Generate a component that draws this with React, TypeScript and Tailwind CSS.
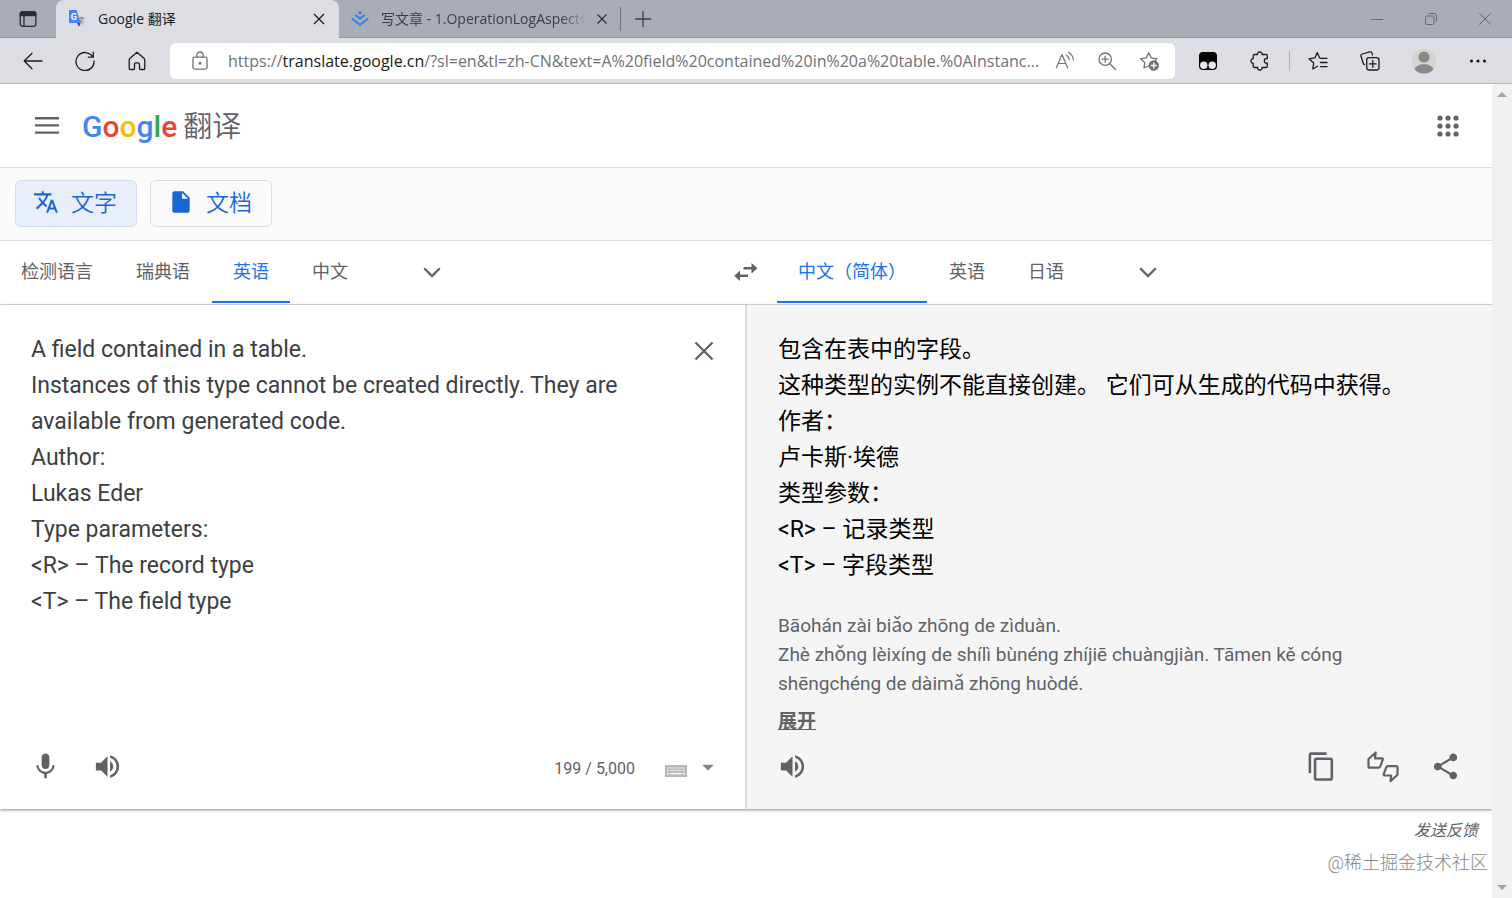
import { useState, type ReactNode } from "react";
import {
  MdContentCopy,
  MdArrowDropDown,
  MdInsertDriveFile,
  MdMic,
  MdShare,
  MdTranslate,
  MdVolumeUp,
} from "react-icons/md";

const UI = "font-['Open_Sans','Noto_Sans_CJK_SC',sans-serif]";
const BODY = "font-[Roboto,'Noto_Sans_CJK_SC',sans-serif]";

const SOURCE_TEXT = `A field contained in a table.
Instances of this type cannot be created directly. They are available from generated code.
Author:
Lukas Eder
Type parameters:
<R> – The record type
<T> – The field type`;

const TRANSLATION = [
  "包含在表中的字段。",
  "这种类型的实例不能直接创建。 它们可从生成的代码中获得。",
  "作者：",
  "卢卡斯·埃德",
  "类型参数：",
  "<R> – 记录类型",
  "<T> – 字段类型",
];

type IconButtonProps = { label: string; className?: string; children: ReactNode };

function IconButton({ label, className = "", children }: IconButtonProps) {
  return (
    <button type="button" aria-label={label} className={`flex shrink-0 items-center justify-center ${className}`}>
      {children}
    </button>
  );
}

type LineIconProps = { size?: number; stroke?: number; children: ReactNode };

function LineIcon({ size = 20, stroke = 1.3, children }: LineIconProps) {
  return (
    <svg
      width={size}
      height={size}
      viewBox="0 0 20 20"
      fill="none"
      stroke="currentColor"
      strokeWidth={stroke}
      strokeLinecap="round"
      strokeLinejoin="round"
      aria-hidden="true"
    >
      {children}
    </svg>
  );
}

function TranslateFavicon() {
  return (
    <svg width="18" height="18" viewBox="0 0 18 18" aria-hidden="true">
      <path d="M8 5h8.2c.5 0 .8.3.8.8v9.4c0 .5-.3.8-.8.8H11z" fill="#d3d6dc" />
      <path d="M11 8.2h5M13.4 7v1.2M15 8.2c-.5 2-1.600 3.500-3.200 4.600M12 9.800c.7 1.500 1.800 2.700 3.300 3.500" stroke="#6f7378" strokeWidth=".9" fill="none" />
      <path d="M1 0h7.600l4 13H2c-.6 0-1-.4-1-1z" fill="#4285f4" />
      <path d="M9 13h3.600L11 17z" fill="#5b3fa6" />
      <text x="2.800" y="9.800" fontSize="9" fontWeight="700" fontFamily="Roboto" fill="#fff">G</text>
    </svg>
  );
}

function TabStrip() {
  return (
    <div className="flex h-[38px] bg-[#a9adb5] text-[#3c4046]">
      <IconButton label="标签页操作" className="w-14 border-b border-[#90949b] text-[#2a2d31]">
        <svg width="18" height="18" viewBox="0 0 18 18" fill="none" stroke="currentColor" strokeWidth="1.300" aria-hidden="true">
          <rect x="1.200" y="1.700" width="15.600" height="14.600" rx="2.500" />
          <path d="M1.200 5.500V4a2.300 2.300 0 0 1 2.300-2.300h11A2.300 2.300 0 0 1 16.800 4v1.500z" fill="currentColor" />
          <path d="M5 5.500v10.500" />
        </svg>
      </IconButton>
      <div className="flex w-[283px] items-center rounded-t-lg bg-[#dcdee3] pr-3 pl-3">
        <TranslateFavicon />
        <span className="ml-3 flex-1 text-sm text-[#202124]">Google 翻译</span>
        <IconButton label="关闭标签页" className="size-4 text-[#1b1b1b]">
          <svg width="12" height="12" viewBox="0 0 12 12" stroke="currentColor" strokeWidth="1.300" aria-hidden="true">
            <path d="M1 1l10 10M11 1L1 11" />
          </svg>
        </IconButton>
      </div>
      <div className="flex flex-1 items-center border-b border-[#90949b] pl-3">
        <svg width="18" height="16" viewBox="0 0 18 16" fill="none" stroke="#2f7ff0" strokeWidth="1.900" aria-hidden="true">
          <path d="M9 .3l2 1.600L9 3.500 7 1.900z" fill="#2f7ff0" stroke="none" />
          <path d="M4.200 3.900L9 7.700l4.800-3.800M.8 7.400L9 13.900l8.200-6.500" />
        </svg>
        <span className="ml-3 w-[205px] overflow-hidden whitespace-nowrap text-sm [mask-image:linear-gradient(to_right,black_88%,transparent)]">
          写文章 - 1.OperationLogAspect代
        </span>
        <IconButton label="关闭标签页" className="ml-2 size-4 text-[#2a2d31]">
          <svg width="12" height="12" viewBox="0 0 12 12" stroke="currentColor" strokeWidth="1.200" aria-hidden="true">
            <path d="M1.500 1.500l9 9M10.500 1.500l-9 9" />
          </svg>
        </IconButton>
        <span className="ml-2.5 h-6 w-px bg-[#6e7278]" />
        <IconButton label="新建标签页" className="ml-3 size-5 text-[#3c4046]">
          <svg width="18" height="18" viewBox="0 0 18 18" stroke="currentColor" strokeWidth="1.300" aria-hidden="true">
            <path d="M9 1v16M1 9h16" />
          </svg>
        </IconButton>
        <div className="ml-auto flex text-[#666a70]">
          <IconButton label="最小化" className="w-[54px]">
            <svg width="12" height="12" viewBox="0 0 12 12" stroke="currentColor" aria-hidden="true">
              <path d="M0 6.500h12" />
            </svg>
          </IconButton>
          <IconButton label="还原" className="w-[54px]">
            <svg width="12" height="12" viewBox="0 0 12 12" fill="none" stroke="currentColor" aria-hidden="true">
              <rect x=".5" y="3" width="8.500" height="8.500" rx="1.500" />
              <path d="M3 1.200C3.300.8 3.800.5 4.300.5H9A2.500 2.500 0 0 1 11.500 3v4.700c0 .5-.3 1-.7 1.300" />
            </svg>
          </IconButton>
          <IconButton label="关闭窗口" className="w-[54px]">
            <svg width="12" height="12" viewBox="0 0 12 12" stroke="currentColor" aria-hidden="true">
              <path d="M.3.3l11.400 11.400M11.700.3L.3 11.700" />
            </svg>
          </IconButton>
        </div>
      </div>
    </div>
  );
}

function Toolbar() {
  return (
    <div className="flex h-[46px] items-center border-b border-[#b4b6ba] bg-[#dcdee3] text-[#1b1b1b]">
      <div className="flex w-[170px] gap-8 pl-[23px]">
        <IconButton label="后退" className="size-5">
          <LineIcon><path d="M19 10H1.200M9 2.200L1.200 10 9 17.800" /></LineIcon>
        </IconButton>
        <IconButton label="刷新" className="size-5">
          <LineIcon><path d="M17.800 6A9 9 0 1 0 19 10M18.300 1.200V6.200H13.300" /></LineIcon>
        </IconButton>
        <IconButton label="主页" className="size-5">
          <LineIcon>
            <path d="M10 1.300l7.200 6.200c.4.300.6.800.6 1.300v8.700c0 .6-.4 1-1 1h-3.300c-.6 0-1-.4-1-1v-4c0-1-.6-1.700-1.500-1.700H9c-.9 0-1.500.7-1.500 1.700v4c0 .6-.4 1-1 1H3.200c-.6 0-1-.4-1-1V8.800c0-.5.2-1 .6-1.300z" />
          </LineIcon>
        </IconButton>
      </div>
      <div className="flex h-9 min-w-0 flex-1 items-center rounded-md bg-white pr-4 pl-5 text-[#6f7276]">
        <IconButton label="查看站点信息" className="size-5">
          <LineIcon>
            <rect x="3" y="6.200" width="14" height="12" rx="1.800" />
            <path d="M6.800 6V4.200a3.200 3.200 0 0 1 6.400 0V6" />
            <circle cx="10" cy="12.200" r=".8" fill="currentColor" />
          </LineIcon>
        </IconButton>
        <div
          role="textbox"
          aria-label="地址栏"
          tabIndex={0}
          className="ml-[18px] min-w-0 flex-1 whitespace-nowrap text-base"
        >
          https://<span className="text-[#1b1b1b]">translate.google.cn</span>
          /?sl=en&amp;tl=zh-CN&amp;text=A%20field%20contained%20in%20a%20table.%0AInstanc...
        </div>
        <div className="ml-4 flex gap-[22px]">
          <IconButton label="大声朗读" className="size-5">
            <LineIcon stroke={1.2}>
              <path d="M1.300 17L7 3.500 12.700 17M3.200 12.500h7.600M11.500 4.200c1.500 1 2.500 2.500 2.700 4.300M13.500 1.300c2.800 1.700 4.600 4.400 5 7.700" />
            </LineIcon>
          </IconButton>
          <IconButton label="缩放" className="size-5">
            <LineIcon>
              <circle cx="8.200" cy="8.200" r="6.200" />
              <path d="M12.800 12.800l5.700 5.700M8.200 5.200v6M5.200 8.200h6" />
            </LineIcon>
          </IconButton>
          <IconButton label="添加到收藏夹" className="size-5">
            <LineIcon size={22}>
              <path d="M10.500 14.500L5 17l.7-5.500L1.500 7.800l5.800-.9L9.800 1.800l2.500 5.100 5.700.9-1.500 1.500" />
              <circle cx="14.800" cy="14.500" r="4.500" fill="currentColor" />
              <path d="M14.800 12v5M12.300 14.500h5" stroke="#fff" />
            </LineIcon>
          </IconButton>
        </div>
      </div>
      <div className="flex items-center pr-[23px] pl-[22px]">
        <IconButton label="篡改猴" className="size-[22px]">
          <svg width="20" height="20" viewBox="0 0 20 20" aria-hidden="true">
            <rect x="1" y="1" width="18" height="18" rx="4" fill="#050505" />
            <circle cx="5.800" cy="14.200" r="3.700" fill="#e6e7ea" />
            <circle cx="14.200" cy="14.200" r="3.700" fill="#e6e7ea" />
          </svg>
        </IconButton>
        <IconButton label="扩展" className="ml-[30px] size-[22px]">
          <LineIcon>
            <path d="M4.500 3.500h3C7.300 1.900 8.400 1 9.800 1s2.500.9 2.300 2.500H16c.8 0 1.300.5 1.300 1.300v2.700c-2.300-.2-3 1-3 2.300s.7 2.600 3 2.400v3c0 .8-.5 1.300-1.300 1.300h-3.900c.2 1.600-.9 2.500-2.300 2.500s-2.500-.9-2.300-2.500h-3c-.8 0-1.300-.5-1.300-1.300v-2.900C1.700 12.300 1 11.200 1 9.900s.7-2.400 2.200-2.200V4.800c0-.8.500-1.300 1.300-1.300z" />
          </LineIcon>
        </IconButton>
        <span className="ml-[18px] h-5 w-px bg-[#aeb0b4]" />
        <IconButton label="收藏夹" className="ml-[17px] size-[22px]">
          <LineIcon>
            <path d="M9.500 15.200L4.800 18l.9-6L1 7.800l5.800-.9L9.300 1.500l2.300 5.400M12.500 7.300H19M12.500 11.500H19M12.500 15.700H19" />
          </LineIcon>
        </IconButton>
        <IconButton label="集锦" className="ml-[30px] size-[22px]">
          <LineIcon>
            <rect x="6.700" y="6.700" width="12.300" height="12.300" rx="2.500" />
            <path d="M12.800 9.500v6.800M9.500 12.900h6.700M4.500 13.700c-.7-.2-1-.6-1.200-1.200L1 5.200c-.3-1 .2-1.900 1.200-2.200L9.800.9c1-.3 1.900.2 2.200 1.200l.5 1.800" />
          </LineIcon>
        </IconButton>
        <IconButton label="个人资料" className="ml-[30px] size-[26px]">
          <svg width="26" height="26" viewBox="0 0 26 26" aria-hidden="true">
            <circle cx="13" cy="13" r="12.500" fill="#d6d4d3" />
            <circle cx="13" cy="9" r="5.600" fill="#8a8886" />
            <path d="M3.500 21.200c1.500-3.300 5.200-5 9.500-5s8 1.700 9.500 5A12.500 12.500 0 0 1 13 25.500a12.500 12.500 0 0 1-9.500-4.300z" fill="#8a8886" />
          </svg>
        </IconButton>
        <IconButton label="设置及其他" className="ml-[30px] size-[22px]">
          <svg width="18" height="4" viewBox="0 0 18 4" fill="currentColor" aria-hidden="true">
            <circle cx="2.500" cy="2" r="1.600" />
            <circle cx="9" cy="2" r="1.600" />
            <circle cx="15.500" cy="2" r="1.600" />
          </svg>
        </IconButton>
      </div>
    </div>
  );
}

function AppHeader() {
  return (
    <header className="flex h-[84px] items-center border-b border-[#dadce0] pr-8 pl-[35px] text-[#5f6368]">
      <IconButton label="主菜单" className="size-6">
        <svg width="24" height="17" viewBox="0 0 24 17" fill="currentColor" aria-hidden="true">
          <path d="M0 0h24v2.400H0zM0 7.200h24v2.400H0zM0 14.400h24v2.400H0z" />
        </svg>
      </IconButton>
      <a href="#home" className="ml-[23px] flex items-center gap-1.5 pt-0.5">
        <span className="text-[30px] leading-10 font-medium">
          <span className="text-[#4285f4]">G</span>
          <span className="text-[#ea4335]">o</span>
          <span className="text-[#fbbc05]">o</span>
          <span className="text-[#4285f4]">g</span>
          <span className="text-[#34a853]">l</span>
          <span className="text-[#ea4335]">e</span>
        </span>
        <span className="text-[29px] leading-10 font-[350]">翻译</span>
      </a>
      <IconButton label="Google 应用" className="ml-auto size-6">
        <svg width="22" height="22" viewBox="0 0 22 22" fill="currentColor" aria-hidden="true">
          {[3, 11, 19].map((y) => [3, 11, 19].map((x) => <circle key={`${x}-${y}`} cx={x} cy={y} r="2.600" />))}
        </svg>
      </IconButton>
    </header>
  );
}

function ModeBar() {
  return (
    <nav className="flex h-[73px] items-center gap-[13px] border-b border-[#dadce0] bg-[#fafafa] px-[15px] pb-px text-[23px] font-[350] text-[#1967d2]">
      <button type="button" className="flex h-[47px] items-center gap-3 rounded-md border border-[#d2dcef] bg-[#e8eefa] pt-0.5 pr-[19px] pl-[17px]">
        <MdTranslate size={26} className="mb-1.5" />
        文字
      </button>
      <button type="button" className="flex h-[47px] items-center gap-3 rounded-md border border-[#dadce0] pt-0.5 pr-[19px] pl-[17px]">
        <MdInsertDriveFile size={26} className="mb-1.5" />
        文档
      </button>
    </nav>
  );
}

type LanguageTabsProps = { languages: string[]; initial: number };

function LanguageTabs({ languages, initial }: LanguageTabsProps) {
  const [active, setActive] = useState(initial);
  return (
    <div className="flex min-w-0 flex-1 gap-px">
      {languages.map((language, index) => (
        <button
          key={language}
          type="button"
          aria-pressed={index === active}
          onClick={() => setActive(index)}
          className={`border-b-2 px-[21px] whitespace-nowrap ${
            index === active ? "border-[#1a73e8] text-[#1a73e8]" : "border-transparent"
          }`}
        >
          {language}
        </button>
      ))}
      <IconButton label="更多语言" className="ml-[50px] w-6">
        <svg width="18" height="11" viewBox="0 0 18 11" fill="none" stroke="currentColor" strokeWidth="2.200" aria-hidden="true">
          <path d="M1.200 1.300L9 9.100l7.800-7.800" />
        </svg>
      </IconButton>
    </div>
  );
}

function LanguageBar() {
  return (
    <div className="flex h-16 border-b border-[#dadce0] pb-px text-[18px] text-[#5f6368]">
      <LanguageTabs languages={["检测语言", "瑞典语", "英语", "中文"]} initial={2} />
      <IconButton label="交换语言" className="w-[62px]">
        <svg width="24" height="18" viewBox="0 0 24 18" fill="currentColor" aria-hidden="true">
          <path d="M17.500 0L23.500 5.300 17.500 10.500V6.500H9.500V4H17.500zM6 7.500V11.500H14V14H6V18L.3 12.700z" />
        </svg>
      </IconButton>
      <LanguageTabs languages={["中文（简体）", "英语", "日语"]} initial={0} />
    </div>
  );
}

function SourcePanel() {
  const [text, setText] = useState(SOURCE_TEXT);
  return (
    <section className="flex flex-col border-r border-[#dadce0]">
      <div className="flex flex-1 pt-[27px] pr-[30px] pl-[31px]">
        <textarea
          aria-label="原文"
          value={text}
          onChange={(event) => setText(event.target.value)}
          className="min-w-0 flex-1 resize-none overflow-hidden text-[23px] leading-9 text-[#3c4043] outline-none"
        />
        <IconButton label="清除原文" className="mt-2 ml-8 size-[22px] text-[#5f6368]">
          <svg width="20" height="20" viewBox="0 0 20 20" stroke="currentColor" strokeWidth="2.200" aria-hidden="true">
            <path d="M1.500 1.500l17 17M18.500 1.500l-17 17" />
          </svg>
        </IconButton>
      </div>
      <div className="flex h-[77px] items-center pr-[23px] pb-2 pl-[29px] text-[#5f6368]">
        <IconButton label="通过语音翻译" className="size-8"><MdMic size={31} /></IconButton>
        <IconButton label="收听原文" className="ml-[30px] size-8"><MdVolumeUp size={31} /></IconButton>
        <span className="ml-auto pt-1 text-base">199 / 5,000</span>
        <IconButton label="虚拟键盘" className="mt-2 ml-[27px] w-7">
          <svg width="22" height="12" viewBox="0 0 22 12" aria-hidden="true">
            <rect width="22" height="12" fill="#b7b9bb" />
            <path d="M2 3h18M2 5.500h18" stroke="#fff" strokeWidth="1.200" strokeDasharray="1.300 1" />
            <path d="M2 8.700h2.500M5.500 8.700h11M17.500 8.700H20" stroke="#fff" strokeWidth="1.200" />
          </svg>
        </IconButton>
        <IconButton label="选择输入工具" className="ml-1 size-7 text-[#80868b]"><MdArrowDropDown size={28} /></IconButton>
      </div>
    </section>
  );
}

function ResultPanel() {
  return (
    <section className="flex flex-col border-l border-[#dadce0] bg-[#f5f5f5] pl-[31px]">
      <div className="flex-1 pt-[27px] pr-8">
        <div className="text-[23px] leading-9 text-black">
          {TRANSLATION.map((line) => (
            <p key={line}>{line}</p>
          ))}
        </div>
        <p className="mt-[27px] max-w-[600px] text-[19px] leading-[29px] text-[#5f6368]">
          Bāohán zài biǎo zhōng de zìduàn.
          <br />
          Zhè zhǒng lèixíng de shílì bùnéng zhíjiē chuàngjiàn. Tāmen kě cóng shēngchéng de dàimǎ zhōng huòdé.
        </p>
        <button type="button" className="mt-3.5 block text-[19px] leading-5 font-bold text-[#5f6368] underline">
          展开
        </button>
      </div>
      <div className="flex h-[77px] items-center pr-[31px] pb-2 text-[#5f6368]">
        <IconButton label="收听译文" className="-ml-0.5 size-8"><MdVolumeUp size={31} /></IconButton>
        <IconButton label="复制译文" className="ml-auto size-8"><MdContentCopy size={31} /></IconButton>
        <IconButton label="评价译文" className="ml-[30px] size-8">
          <svg width="32" height="32" viewBox="0 0 32 32" fill="none" stroke="currentColor" strokeWidth="2.200" strokeLinejoin="round" aria-hidden="true">
            <path d="M1.500 8L8.700 1.500 8 7.300h6.800c.8 0 1.200.6 1 1.300l-2.600 7c-.3.700-.8 1.100-1.600 1.100H3c-.9 0-1.500-.6-1.500-1.500z" />
            <path d="M30.500 23.700L23.500 30.300l.7-5.800h-6.500c-.8 0-1.200-.6-1-1.300l2.600-7c.3-.7.8-1.100 1.600-1.100H29c.9 0 1.500.6 1.500 1.500z" />
          </svg>
        </IconButton>
        <IconButton label="分享译文" className="ml-[30px] size-8"><MdShare size={31} /></IconButton>
      </div>
    </section>
  );
}

function ScrollRail() {
  return (
    <div className="flex w-5 shrink-0 flex-col items-center justify-between bg-[#f1f1f1] py-2 text-[#a3a3a3]" aria-hidden="true">
      <svg width="10" height="5" viewBox="0 0 10 5" fill="currentColor"><path d="M0 5L5 0l5 5z" /></svg>
      <svg width="10" height="5" viewBox="0 0 10 5" fill="currentColor"><path d="M0 0l5 5 5-5z" /></svg>
    </div>
  );
}

export default function App() {
  return (
    <div className={`flex min-h-screen flex-col bg-white ${UI}`}>
      <TabStrip />
      <Toolbar />
      <div className={`flex flex-1 ${BODY}`}>
        <main className="flex min-w-0 flex-1 flex-col">
          <AppHeader />
          <ModeBar />
          <LanguageBar />
          <div className="grid min-h-[504px] grid-cols-2 shadow-[0_1px_3px_rgba(0,0,0,0.45)]">
            <SourcePanel />
            <ResultPanel />
          </div>
          <footer className="flex flex-col items-end pt-2">
            <a href="#feedback" className="mr-[14px] text-base leading-7 text-[#5f6368] italic">发送反馈</a>
            <p className="mt-1 mr-1 text-[18px] leading-7 font-light text-[#85878a]">@稀土掘金技术社区</p>
          </footer>
        </main>
        <ScrollRail />
      </div>
    </div>
  );
}
